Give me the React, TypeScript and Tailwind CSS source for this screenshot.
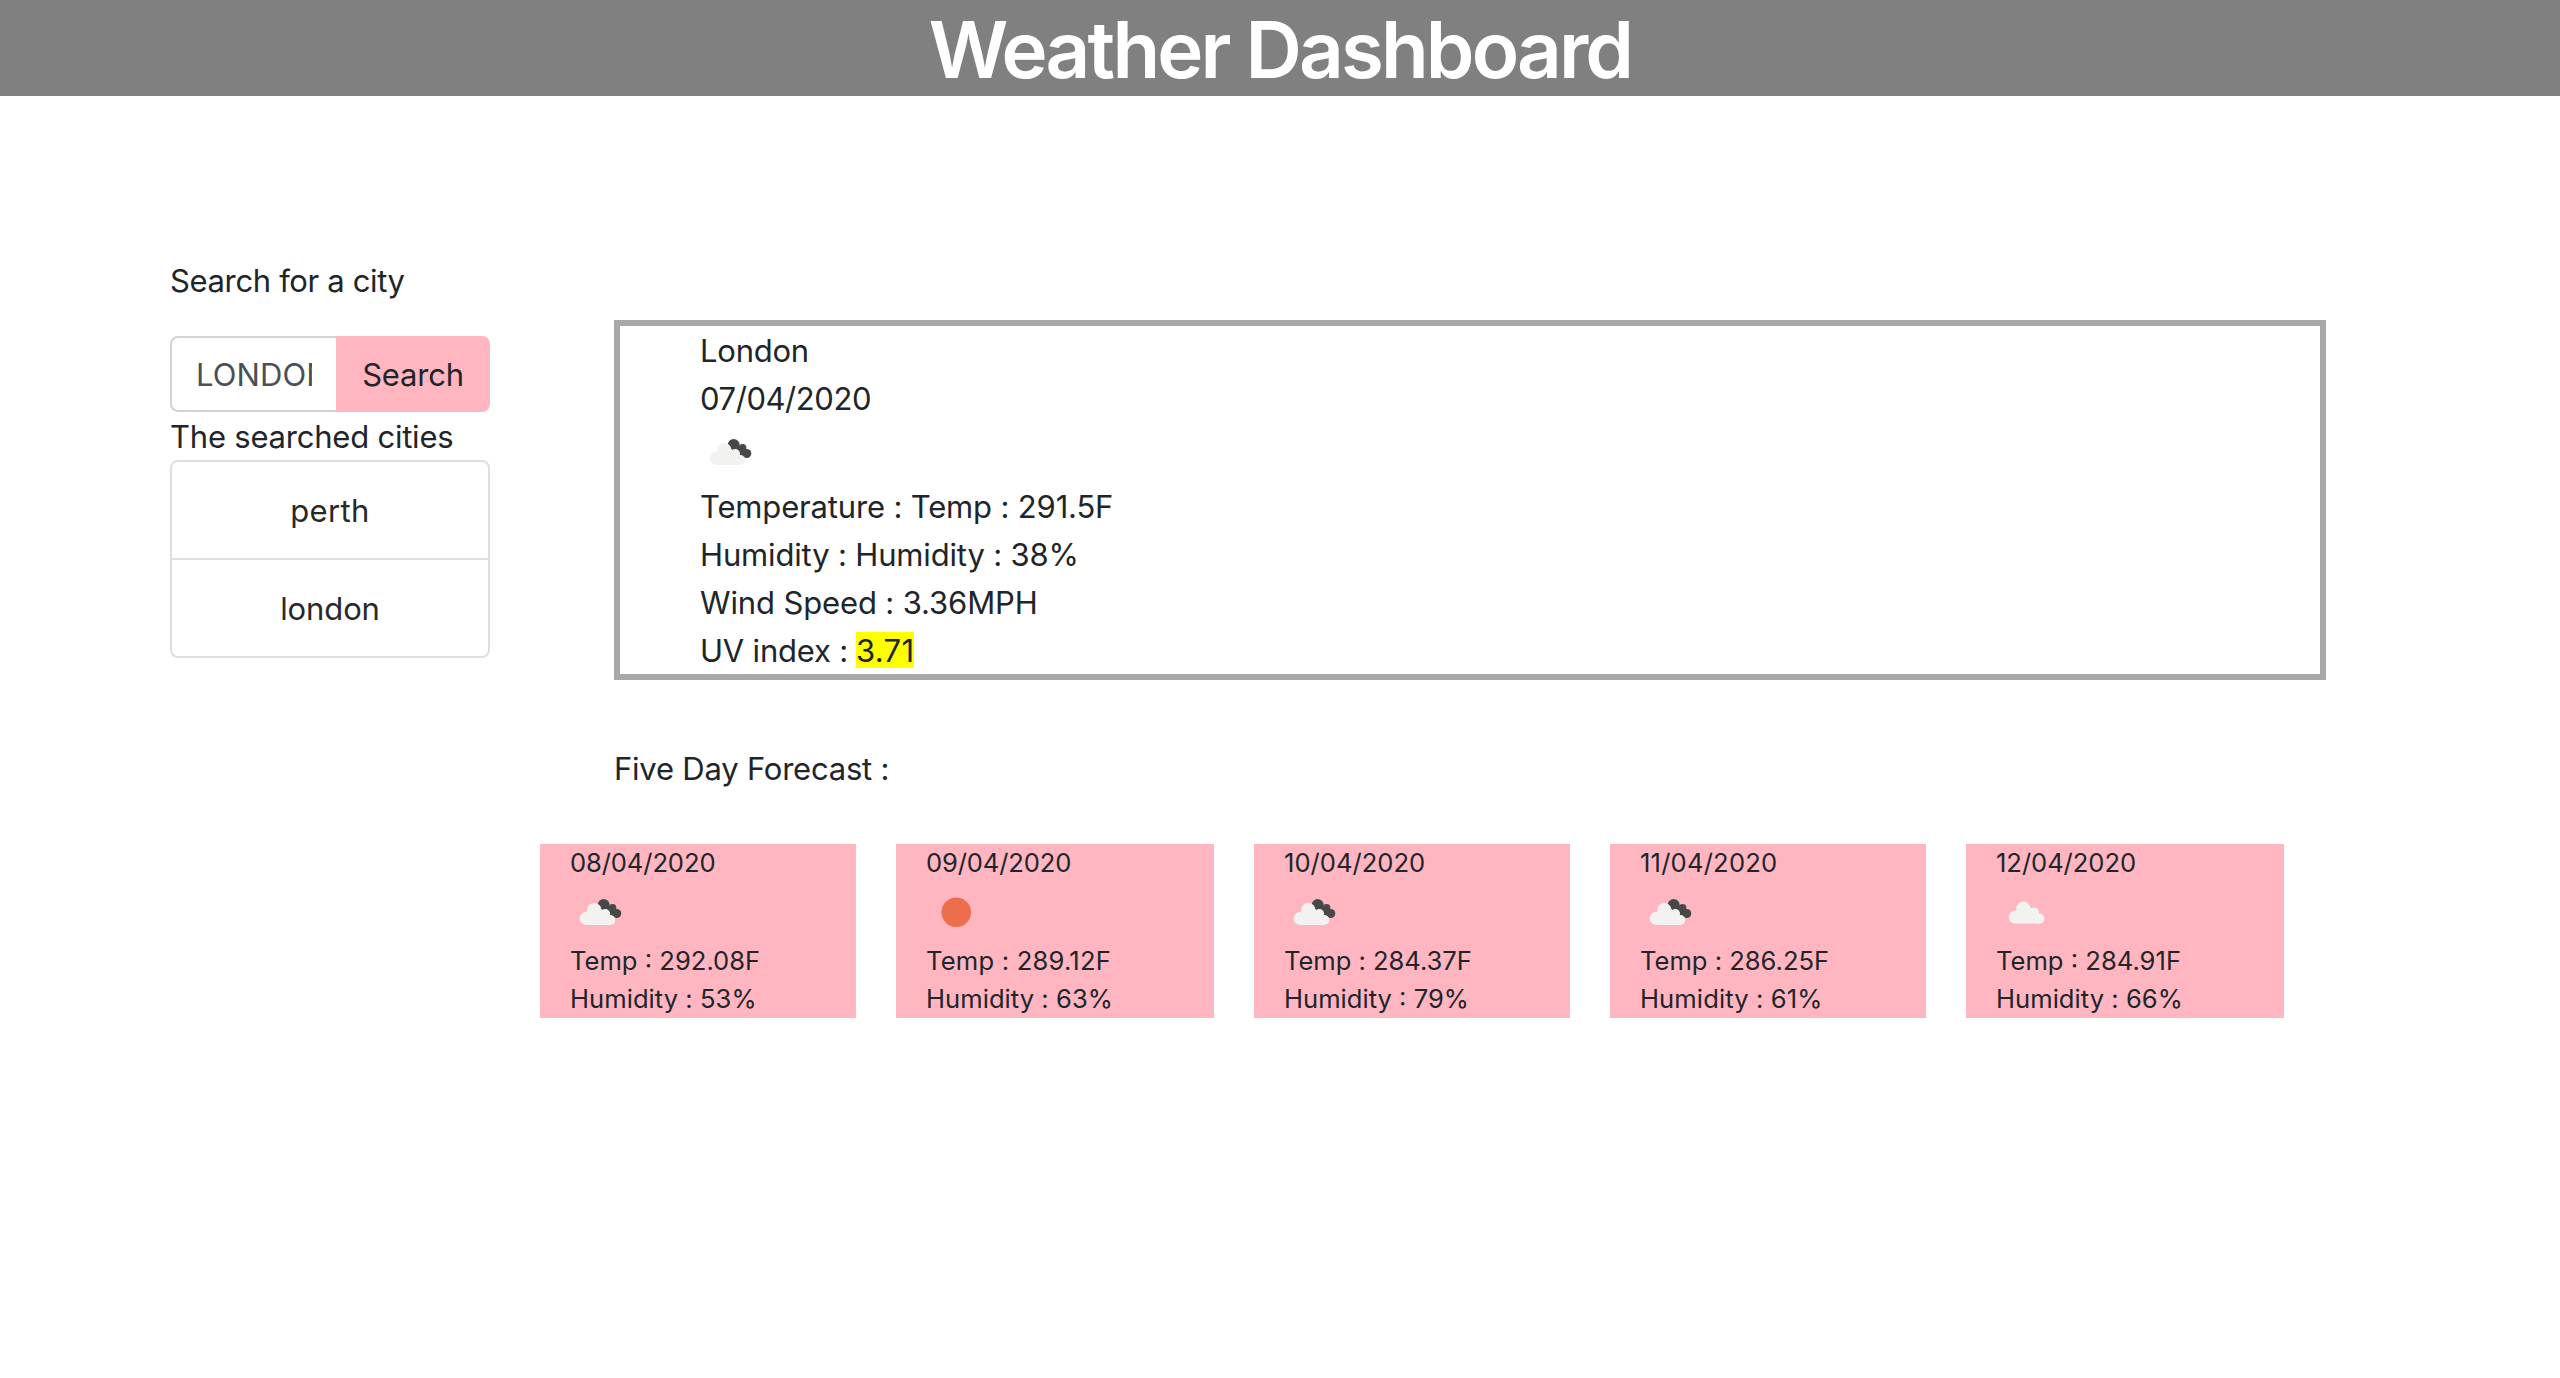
import React from "react";

const CLOUD = "#f2f2f0";

function CloudShape() {
  return (
    <g fill={CLOUD}>
      <circle cx="16.3" cy="36.4" r="6.6" />
      <circle cx="24.3" cy="28.2" r="7.2" />
      <circle cx="35.3" cy="31.8" r="4.8" />
      <circle cx="40.3" cy="38" r="5" />
      <path d="M16.3 30 L30 26 L39 33 L41 43 H16.3 Z" />
    </g>
  );
}

function BrokenClouds() {
  return (
    <svg className="block h-[60px] w-[60px]" viewBox="0 0 60 60" aria-hidden="true">
      <g fill="#484848">
        <circle cx="33.7" cy="23" r="6" />
        <circle cx="42.6" cy="25.8" r="3.8" />
        <circle cx="46.8" cy="31.5" r="4.5" />
        <path d="M33 25 L42 24 L46 30 L45 35.6 L38 34 Z" />
      </g>
      <CloudShape />
    </svg>
  );
}

function ScatteredClouds() {
  return (
    <svg className="block h-[60px] w-[60px]" viewBox="0 0 60 60" aria-hidden="true">
      <g transform="translate(3 -1.4)">
        <CloudShape />
      </g>
    </svg>
  );
}

function Sun() {
  return (
    <svg className="block h-[60px] w-[60px]" viewBox="0 0 60 60" aria-hidden="true">
      <circle cx="30.3" cy="30.2" r="14.8" fill="#ec6e4c" />
    </svg>
  );
}

type Line = { text: string; tracking: string };

const forecast: {
  date: Line;
  temp: Line;
  humidity: Line;
  Icon: () => React.JSX.Element;
  width: string;
}[] = [
  {
    date: { text: "08/04/2020", tracking: "tracking-[-0.12px]" },
    temp: { text: "Temp : 292.08F", tracking: "tracking-normal" },
    humidity: { text: "Humidity : 53%", tracking: "tracking-[0.03px]" },
    Icon: BrokenClouds,
    width: "w-[316px]",
  },
  {
    date: { text: "09/04/2020", tracking: "tracking-[-0.13px]" },
    temp: { text: "Temp : 289.12F", tracking: "tracking-[0.2px]" },
    humidity: { text: "Humidity : 63%", tracking: "tracking-[0.03px]" },
    Icon: Sun,
    width: "w-[318px]",
  },
  {
    date: { text: "10/04/2020", tracking: "tracking-normal" },
    temp: { text: "Temp : 284.37F", tracking: "tracking-[-0.05px]" },
    humidity: { text: "Humidity : 79%", tracking: "tracking-normal" },
    Icon: BrokenClouds,
    width: "w-[316px]",
  },
  {
    date: { text: "11/04/2020", tracking: "tracking-[0.19px]" },
    temp: { text: "Temp : 286.25F", tracking: "tracking-[-0.02px]" },
    humidity: { text: "Humidity : 61%", tracking: "tracking-[0.1px]" },
    Icon: BrokenClouds,
    width: "w-[316px]",
  },
  {
    date: { text: "12/04/2020", tracking: "tracking-[-0.06px]" },
    temp: { text: "Temp : 284.91F", tracking: "tracking-normal" },
    humidity: { text: "Humidity : 66%", tracking: "tracking-[0.02px]" },
    Icon: ScatteredClouds,
    width: "w-[318px]",
  },
];

function SearchPanel() {
  return (
    <aside className="w-80 shrink-0">
      <p className="h-12 tracking-[-0.35px]">Search for a city</p>
      <div className="mt-8 flex h-[76px]">
        <div className="flex w-[166px] items-center rounded-l-lg border-2 border-r-0 border-[#ced4da] px-6">
          <span className="h-12 w-full overflow-hidden whitespace-nowrap tracking-[0.1px] text-[#495057]">
            LONDON
          </span>
        </div>
        <button className="w-[154px] rounded-r-lg bg-[#ffb6c1] pt-px tracking-[-0.2px]">Search</button>
      </div>
      <p className="h-12 tracking-[-0.22px]">The searched cities</p>
      <ul className="divide-y-2 divide-[#dfdfdf] overflow-hidden rounded-lg border-2 border-[#dfdfdf] text-center text-[#282828]">
        <li className="pt-6 pb-[22px] tracking-[0.35px]">perth</li>
        <li className="pt-6 pb-[22px] tracking-[-0.1px]">london</li>
      </ul>
    </aside>
  );
}

function CurrentWeather() {
  return (
    <div className="ml-[74px] w-[1712px] border-[6px] border-[#a9a9a9] pl-20">
      <p className="h-12 tracking-[-0.23px]">London</p>
      <p className="h-12 tracking-[-0.43px]">07/04/2020</p>
      <BrokenClouds />
      <p className="h-12 tracking-[-0.16px]">Temperature : Temp : 291.5F</p>
      <p className="h-12 tracking-[-0.16px]">Humidity : Humidity : 38%</p>
      <p className="h-12 tracking-[-0.13px]">Wind Speed : 3.36MPH</p>
      <p className="flex h-12 items-start">
        <span className="w-[156px] tracking-[-0.2px]">UV index :</span>
        <span className="mt-1.5 h-9 w-[58px] bg-[yellow] leading-[38px] tracking-[0.3px]">3.71</span>
      </p>
    </div>
  );
}

export default function App() {
  return (
    <div className="h-[1378px] overflow-hidden bg-white font-['Inter','Liberation_Sans',sans-serif] text-[31px] leading-[50px] text-[#212529]">
      <header className="h-24 overflow-hidden bg-[#808080]">
        <h1 className="text-center text-[78px] leading-[99px] font-[570] tracking-[-2.85px] text-white">
          Weather Dashboard
        </h1>
      </header>
      <main className="flex gap-[50px] pt-40 pl-[170px]">
        <SearchPanel />
        <section className="pt-16">
          <CurrentWeather />
          <h2 className="mt-16 ml-[74px] h-12 tracking-[-0.22px]">Five Day Forecast :</h2>
          <div className="mt-[52px] flex gap-10 text-[25.6px] leading-[38px]">
            {forecast.map(({ date, temp, humidity, Icon, width }) => (
              <article key={date.text} className={`${width} bg-[#ffb6c1] pl-[30px]`}>
                <p className={date.tracking}>{date.text}</p>
                <Icon />
                <p className={temp.tracking}>{temp.text}</p>
                <p className={humidity.tracking}>{humidity.text}</p>
              </article>
            ))}
          </div>
        </section>
      </main>
    </div>
  );
}
